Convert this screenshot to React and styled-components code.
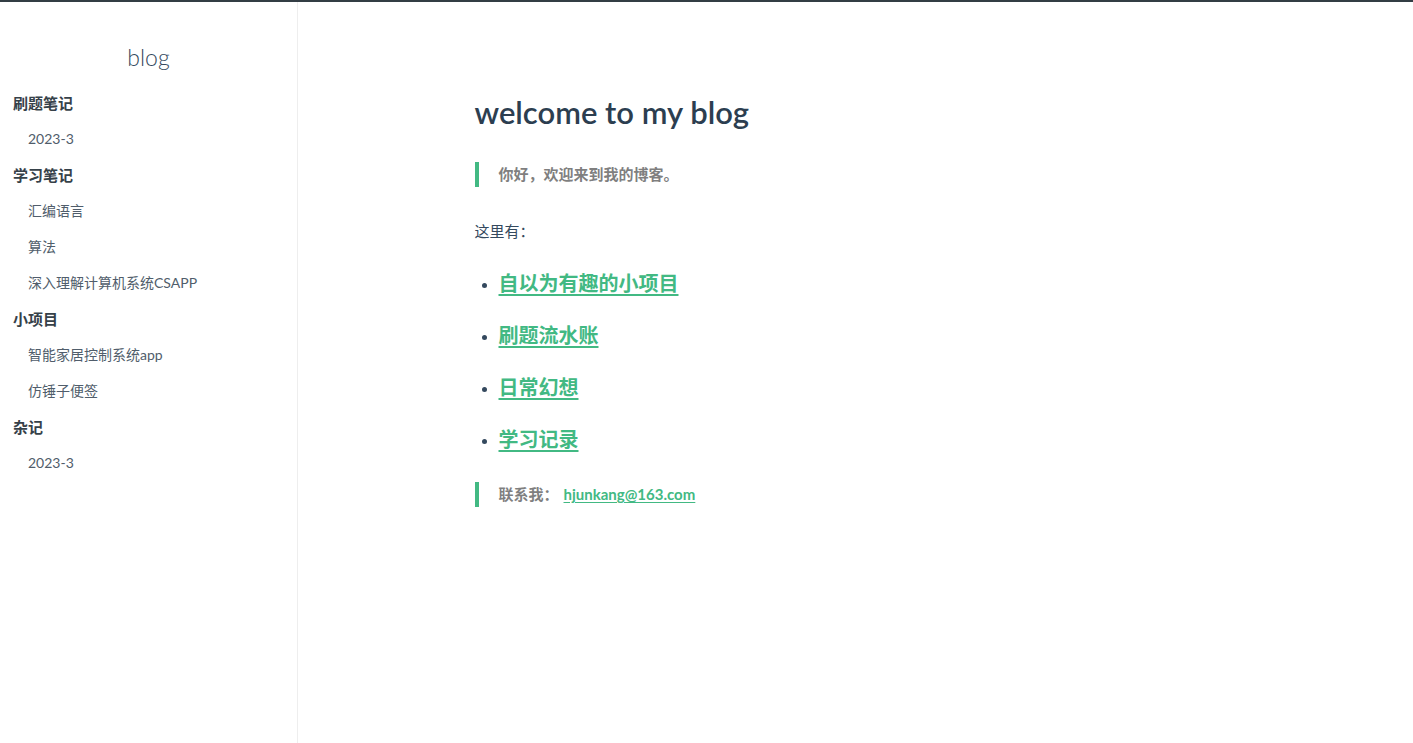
import React from "react";
import styled, { createGlobalStyle } from "styled-components";

const Global = createGlobalStyle`
  *, *::before, *::after { box-sizing: border-box; }
  html, body { margin: 0; padding: 0; }
  body {
    font-family: "Lato", "Noto Sans CJK SC", sans-serif;
    font-size: 15px;
    color: #34495e;
    background: #fff;
    -webkit-font-smoothing: antialiased;
  }
`;

const Page = styled.div`
  display: flex;
  height: 100vh;
  border-top: 2px solid #333d44;
`;

const Sidebar = styled.aside`
  width: 298px;
  flex: none;
  border-right: 1px solid #eeeeee;
  display: flex;
  flex-direction: column;
  padding-top: 37px;
`;

const AppName = styled.h1`
  margin: 0 0 13px;
  text-align: center;
  font-size: 23px;
  font-weight: 300;
  line-height: 36px;
  color: #34495e;
`;

const Nav = styled.ul`
  list-style: none;
  margin: 0;
  padding: 0;
  display: flex;
  flex-direction: column;
  gap: 6px;
`;

const NavItem = styled.li`
  line-height: 30px;
  height: 30px;
  padding-left: ${(p) => (p.$child ? "28px" : "13px")};
  font-size: ${(p) => (p.$child ? "14px" : "15px")};
  font-weight: ${(p) => (p.$child ? 400 : 700)};
  color: ${(p) => (p.$child ? "#505d6b" : "#364149")};
  white-space: nowrap;
`;

const Main = styled.main`
  flex: 1;
  min-width: 0;
`;

const Section = styled.article`
  max-width: 800px;
  margin: 0 auto;
  padding: 86px 15px 40px 19px;
  display: flex;
  flex-direction: column;
`;

const Title = styled.h1`
  margin: 0 0 26px;
  font-size: 31px;
  line-height: 48px;
  font-weight: 600;
  color: #2c3e50;
`;

const Quote = styled.blockquote`
  margin: ${(p) => p.$mt || "0"} 0 0;
  border-left: 4px solid #42b983;
  padding-left: 20px;
  height: 25px;
  line-height: 25px;
  font-size: 15px;
  font-weight: 700;
  color: #7f7f7f;
`;

const Para = styled.p`
  margin: 32px 0 0;
  line-height: 24px;
  font-size: 15px;
`;

const List = styled.ul`
  margin: 24px 0 0;
  padding: 0 0 0 24px;
  display: flex;
  flex-direction: column;
  gap: 20px;
`;

const Item = styled.li`
  height: 32px;
  line-height: 32px;
  font-size: 20px;
  &::marker { color: #34495e; font-size: 15px; }
`;

const BigLink = styled.a`
  font-weight: 700;
  color: #42b983;
  text-decoration: underline;
  text-decoration-thickness: 2px;
  text-underline-offset: 3px;
`;

const MailLink = styled.a`
  color: #42b983;
  font-weight: 700;
  text-decoration: underline;
  text-underline-offset: 2px;
  margin-left: 5px;
`;

const nav = [
  { t: "刷题笔记" },
  { t: "2023-3", c: true },
  { t: "学习笔记" },
  { t: "汇编语言", c: true },
  { t: "算法", c: true },
  { t: "深入理解计算机系统CSAPP", c: true },
  { t: "小项目" },
  { t: "智能家居控制系统app", c: true },
  { t: "仿锤子便签", c: true },
  { t: "杂记" },
  { t: "2023-3", c: true },
];

const links = ["自以为有趣的小项目", "刷题流水账", "日常幻想", "学习记录"];

export default function App() {
  return (
    <>
      <Global />
      <Page>
        <Sidebar>
          <AppName>blog</AppName>
          <Nav>
            {nav.map((n, i) => (
              <NavItem key={i} $child={n.c}>
                {n.t}
              </NavItem>
            ))}
          </Nav>
        </Sidebar>
        <Main>
          <Section>
            <Title>welcome to my blog</Title>
            <Quote>你好，欢迎来到我的博客。</Quote>
            <Para>这里有：</Para>
            <List>
              {links.map((l) => (
                <Item key={l}>
                  <BigLink href="#">{l}</BigLink>
                </Item>
              ))}
            </List>
            <Quote $mt="27px">
              联系我：
              <MailLink href="#">hjunkang@163.com</MailLink>
            </Quote>
          </Section>
        </Main>
      </Page>
    </>
  );
}
